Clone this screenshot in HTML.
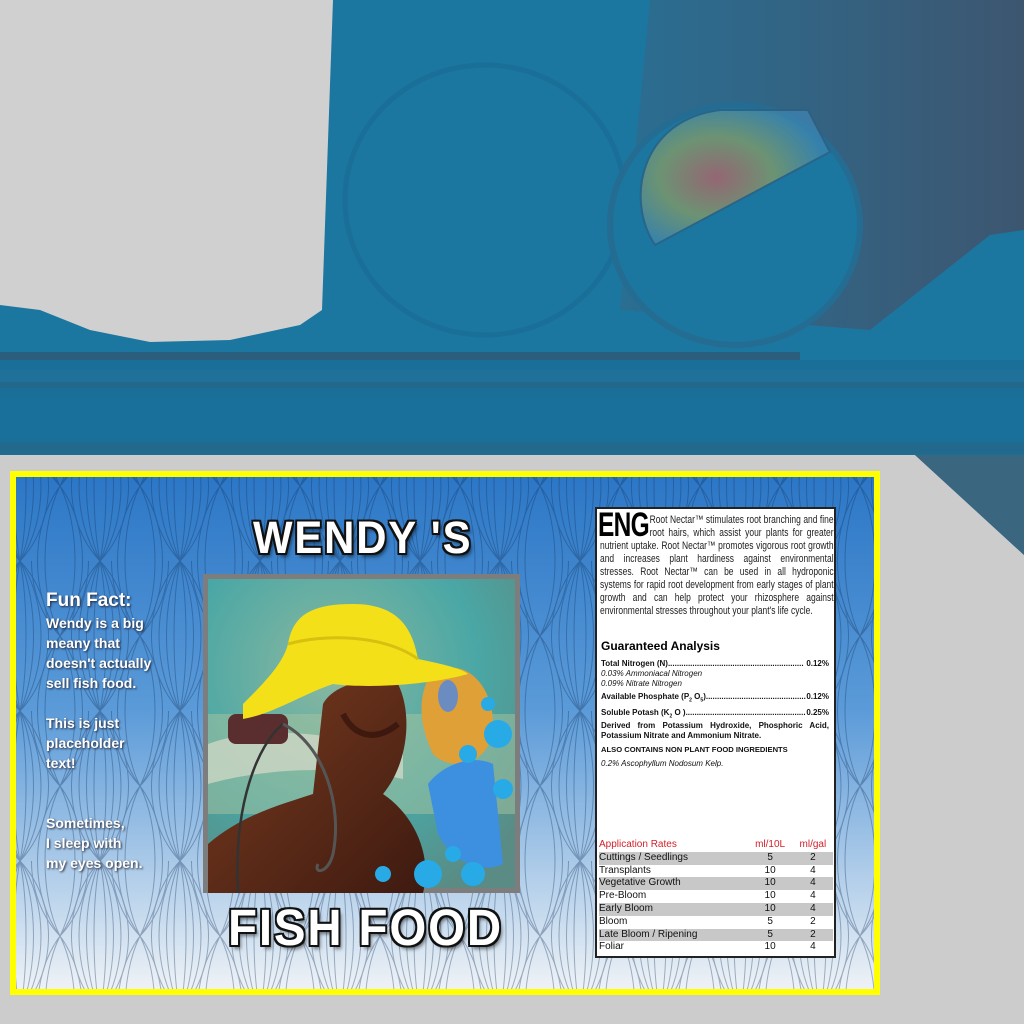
<!DOCTYPE html>
<html><head><meta charset="utf-8">
<style>
html,body{margin:0;padding:0;}
body{width:1024px;height:1024px;position:relative;overflow:hidden;background:#1b76a0;font-family:"Liberation Sans",sans-serif;}
.abs{position:absolute;}
.title{position:absolute;color:#fff;font-family:"Liberation Sans",sans-serif;font-weight:bold;letter-spacing:2px;transform:scaleX(.93);transform-origin:left top;white-space:nowrap;
 text-shadow:-2px -2px 0 #111,2px -2px 0 #111,-2px 2px 0 #111,2px 2px 0 #111,0 2px 0 #111,0 -2px 0 #111,2px 0 0 #111,-2px 0 0 #111,3px 4px 4px rgba(0,0,0,.5);}
.fun{position:absolute;left:46px;color:#fff;font-weight:bold;font-size:14px;line-height:20px;text-shadow:1px 1px 2px #223;}
.panel{position:absolute;left:595px;top:507px;width:241px;height:451px;background:#fff;border:2px solid #222;box-sizing:border-box;}
.t{font-family:"Liberation Sans",sans-serif;}
table td{padding:0;height:12.8px;}
</style></head><body>
<svg class="abs" style="left:0;top:0" width="1024" height="470">
 <defs>
  <linearGradient id="rg" x1="0" y1="0" x2="1" y2="0"><stop offset="0" stop-color="#2a6e92"/><stop offset="1" stop-color="#3d5670"/></linearGradient>
  <radialGradient id="cz" cx=".4" cy=".5" r=".6"><stop offset="0" stop-color="#c86060"/><stop offset=".5" stop-color="#8fa060"/><stop offset="1" stop-color="#3f86b5"/></radialGradient>
 </defs>
 <rect width="1024" height="470" fill="#1b76a0"/>
 <polygon points="650,0 1024,0 1024,230 990,235 870,330 620,310" fill="url(#rg)"/>
 <polygon points="0,0 333,0 322,310 300,325 230,340 150,342 90,330 40,310 0,305" fill="#d0d0d0"/>
 <ellipse cx="485" cy="200" rx="140" ry="135" fill="none" stroke="#1a6f98" stroke-width="5"/>
 <ellipse cx="735" cy="225" rx="125" ry="120" fill="#1b76a0" stroke="#256c92" stroke-width="6"/>
 <path d="M655,245 C625,200 640,120 720,110 L808,110 L830,152 Z" fill="url(#cz)" opacity=".7" stroke="#2e5f80" stroke-width="2"/>
 <rect x="0" y="352" width="800" height="8" fill="#2b5e7c"/>
 <rect x="0" y="360" width="1024" height="95" fill="#1a6f98"/>
 <rect x="0" y="370" width="1024" height="12" fill="#20729a" opacity=".8"/>
 <rect x="0" y="382" width="1024" height="6" fill="#2a6483" opacity=".6"/>
 <rect x="0" y="398" width="1024" height="40" fill="#19709a"/>
 <rect x="0" y="442" width="1024" height="12" fill="#2a6483" opacity=".5"/>
</svg>
<svg class="abs" style="left:0;top:455px" width="1024" height="569">
 <polygon points="0,0 915,0 1024,100 1024,569 0,569" fill="#cccccc"/>
 <polygon points="915,0 1024,0 1024,100" fill="#3a6680"/>
</svg>
<svg class="abs" style="left:10px;top:471px" width="870" height="524">
 <defs>
  <linearGradient id="bg" x1="0" y1="0" x2="0" y2="1"><stop offset="0" stop-color="#2c77c6"/><stop offset=".45" stop-color="#5a9ad8"/><stop offset=".75" stop-color="#a9c9e8"/><stop offset="1" stop-color="#eef2f6"/></linearGradient>
  <pattern id="pt" width="80" height="150" patternUnits="userSpaceOnUse" x="-30" y="-60">
   <g fill="none" stroke="#10305a" stroke-width="1" opacity=".35">
    <path d="M40,0 C2,40 2,110 40,150 C78,110 78,40 40,0Z"/>
    <path d="M40,0 C12,40 12,110 40,150 C68,110 68,40 40,0Z"/>
    <path d="M40,0 C22,40 22,110 40,150 C58,110 58,40 40,0Z"/>
    <path d="M40,0 C32,40 32,110 40,150 C48,110 48,40 40,0Z"/>
    <path d="M0,75 C-38,115 -38,185 0,225 M0,-75 C38,-35 38,35 0,75 C-38,35 -38,-35 0,-75 M80,-75 C42,-35 42,35 80,75 C118,35 118,-35 80,-75"/>
    <path d="M0,75 C30,115 30,185 0,225 M80,75 C50,115 50,185 80,225 M0,75 C20,115 20,185 0,225 M80,75 C60,115 60,185 80,225"/>
    <path d="M0,75 C30,35 30,-35 0,-75 M80,75 C50,35 50,-35 80,-75 M0,75 C20,35 20,-35 0,-75 M80,75 C60,35 60,-35 80,-75"/>
   </g>
  </pattern>
 </defs>
 <rect width="870" height="524" fill="#ffff00"/>
 <rect x="6" y="6" width="858" height="512" fill="url(#bg)"/>
 <rect x="6" y="6" width="858" height="512" fill="url(#pt)"/>
</svg>
<div class="title" style="left:253px;top:512px;font-size:45px;">WENDY 'S</div>
<div class="title" style="left:228px;top:898px;font-size:51px;">FISH FOOD</div>
<div class="fun" style="top:590px;font-size:19px;line-height:22px;">Fun Fact:</div>
<div class="fun" style="top:613px;">Wendy is a big<br>meany that<br>doesn't actually<br>sell fish food.<br><br>This is just<br>placeholder<br>text!<br><br><br>Sometimes,<br>I sleep with<br>my eyes open.</div>
<svg class="abs" style="left:203px;top:574px" width="317" height="319">
 <defs>
  <radialGradient id="tb" cx=".4" cy=".3" r=".8"><stop offset="0" stop-color="#8ab8a0"/><stop offset=".6" stop-color="#4aa7a5"/><stop offset="1" stop-color="#5a8b84"/></radialGradient>
  <linearGradient id="br" x1="0" y1="0" x2="1" y2="1"><stop offset="0" stop-color="#7a3c20"/><stop offset="1" stop-color="#3e1a10"/></linearGradient>
 </defs>
 <rect width="317" height="319" fill="#7d7d7d"/>
 <rect x="5" y="5" width="307" height="309" fill="url(#tb)"/>
 <rect x="5" y="140" width="307" height="100" fill="#a8c4a0" opacity=".5"/>
 <path d="M5,170 C60,150 120,160 200,175 L200,205 C130,190 60,195 5,210Z" fill="#d8dccb" opacity=".7"/>
 <rect x="25" y="140" width="60" height="30" rx="8" fill="#5a2e2e"/>
 <path d="M228,100 C260,80 290,110 290,150 C290,190 250,200 230,180 C215,150 215,120 228,100Z" fill="#e0a038"/>
 <ellipse cx="245" cy="122" rx="10" ry="16" fill="#6a8cc0"/>
 <path d="M5,319 L5,270 C40,240 80,230 110,220 L120,130 C130,110 170,100 195,110 C210,140 205,190 180,220 C210,240 230,280 220,319Z" fill="url(#br)"/>
 <path d="M140,140 C150,160 170,170 195,150" fill="none" stroke="#2a0e08" stroke-width="6" opacity=".6"/>
 <path d="M40,130 C60,110 80,90 85,70 C90,40 110,30 150,30 C200,30 210,60 215,85 C240,90 260,95 265,100 C230,110 170,115 130,110 C100,120 70,140 40,145Z" fill="#f4e019"/>
 <path d="M85,70 C120,60 180,60 215,85" fill="none" stroke="#d8c010" stroke-width="3"/>
 <path d="M80,150 C55,170 30,230 35,319" fill="none" stroke="#333" stroke-width="2.5"/>
 <path d="M80,150 C120,170 140,230 130,280 C125,300 110,300 115,290" fill="none" stroke="#555" stroke-width="3"/>
 <path d="M225,210 C240,190 270,180 290,190 L300,290 C280,300 250,290 235,260Z" fill="#3d8fe0"/>
 <circle cx="225" cy="300" r="14" fill="#28aae6"/><circle cx="270" cy="300" r="12" fill="#28aae6"/>
 <circle cx="295" cy="160" r="14" fill="#28aae6"/><circle cx="265" cy="180" r="9" fill="#28aae6"/>
 <circle cx="180" cy="300" r="8" fill="#28aae6"/><circle cx="300" cy="215" r="10" fill="#28aae6"/>
 <circle cx="285" cy="130" r="7" fill="#28aae6"/><circle cx="250" cy="280" r="8" fill="#28aae6"/>
</svg>
<div class="panel">
 <div class="abs t" style="left:1px;top:1px;font-size:34px;font-weight:bold;line-height:30px;letter-spacing:-1px;transform:scaleX(.72);transform-origin:left top;">ENG</div>
 <div class="abs t" style="left:3px;top:5px;width:292px;font-size:10.6px;line-height:13px;text-align:justify;color:#222;transform:scaleX(.8);transform-origin:left top;"><div style="float:left;width:62px;height:26px;"></div>Root Nectar™ stimulates root branching and fine root hairs, which assist your plants for greater nutrient uptake. Root Nectar™ promotes vigorous root growth and increases plant hardiness against environmental stresses. Root Nectar™ can be used in all hydroponic systems for rapid root development from early stages of plant growth and can help protect your rhizosphere against environmental stresses throughout your plant's life cycle.</div>
 <div class="abs t" style="left:4px;top:130px;font-size:12px;font-weight:bold;">Guaranteed Analysis</div>
 <div class="abs t" style="left:4px;top:150px;width:228px;font-size:8px;line-height:10px;color:#111;">
  <div style="display:flex;font-weight:bold;"><span>Total Nitrogen (N)</span><span style="flex:1;overflow:hidden;white-space:nowrap;">.............................................................</span><span>0.12%</span></div>
  <div style="font-style:italic;">0.03% Ammoniacal Nitrogen<br>0.09% Nitrate Nitrogen</div>
  <div style="display:flex;font-weight:bold;margin-top:3px;"><span>Available Phosphate (P<sub style="font-size:5px">2</sub> O<sub style="font-size:5px">5</sub>)</span><span style="flex:1;overflow:hidden;white-space:nowrap;">.............................................................</span><span>0.12%</span></div>
  <div style="display:flex;font-weight:bold;margin-top:2px;"><span>Soluble Potash (K<sub style="font-size:5px">2</sub> O )</span><span style="flex:1;overflow:hidden;white-space:nowrap;">.............................................................</span><span>0.25%</span></div>
  <div style="font-weight:bold;text-align:justify;">Derived from Potassium Hydroxide, Phosphoric Acid, Potassium Nitrate and Ammonium Nitrate.</div>
  <div style="font-weight:bold;margin-top:4px;font-size:7.6px;">ALSO CONTAINS NON PLANT FOOD INGREDIENTS</div>
  <div style="font-style:italic;margin-top:4px;">0.2% Ascophyllum Nodosum Kelp.</div>
 </div>
 <table class="t" style="position:absolute;left:2px;top:330px;width:234px;border-collapse:collapse;font-size:10px;line-height:12.8px;color:#111;">
  <tr style="color:#d3202a"><td>Application Rates</td><td style="text-align:center">ml/10L</td><td style="text-align:center">ml/gal</td></tr>
  <tr style="background:#c8c8c8"><td>Cuttings / Seedlings</td><td align="center">5</td><td align="center">2</td></tr>
  <tr><td>Transplants</td><td align="center">10</td><td align="center">4</td></tr>
  <tr style="background:#c8c8c8"><td>Vegetative Growth</td><td align="center">10</td><td align="center">4</td></tr>
  <tr><td>Pre-Bloom</td><td align="center">10</td><td align="center">4</td></tr>
  <tr style="background:#c8c8c8"><td>Early Bloom</td><td align="center">10</td><td align="center">4</td></tr>
  <tr><td>Bloom</td><td align="center">5</td><td align="center">2</td></tr>
  <tr style="background:#c8c8c8"><td>Late Bloom / Ripening</td><td align="center">5</td><td align="center">2</td></tr>
  <tr><td>Foliar</td><td align="center">10</td><td align="center">4</td></tr>
 </table>
</div>
</body></html>
